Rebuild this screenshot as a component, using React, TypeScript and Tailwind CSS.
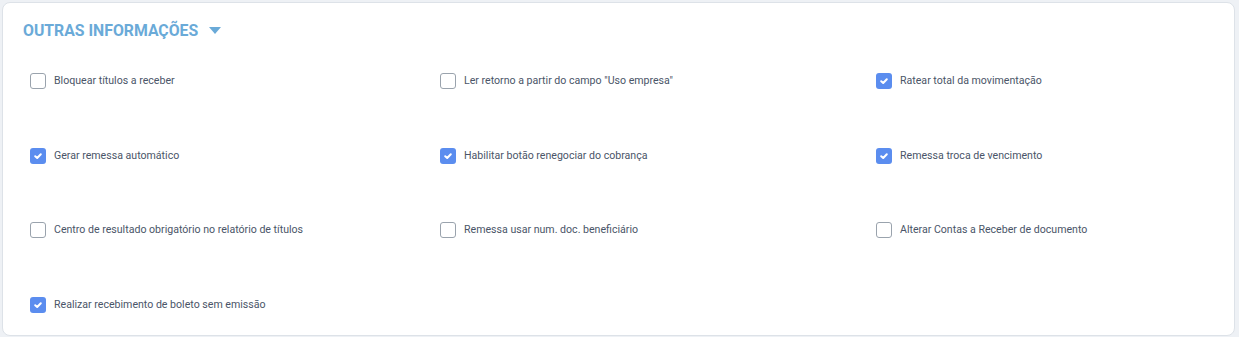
import React from "react";

type Item = { label: string; checked: boolean };

const items: Item[] = [
  { label: "Bloquear títulos a receber", checked: false },
  { label: 'Ler retorno a partir do campo "Uso empresa"', checked: false },
  { label: "Ratear total da movimentação", checked: true },
  { label: "Gerar remessa automático", checked: true },
  { label: "Habilitar botão renegociar do cobrança", checked: true },
  { label: "Remessa troca de vencimento", checked: true },
  { label: "Centro de resultado obrigatório no relatório de títulos", checked: false },
  { label: "Remessa usar num. doc. beneficiário", checked: false },
  { label: "Alterar Contas a Receber de documento", checked: false },
  { label: "Realizar recebimento de boleto sem emissão", checked: true },
];

function Check({ checked }: { checked: boolean }) {
  if (checked) {
    return (
      <span className="w-4 h-4 rounded-[3px] bg-[#5b8def] flex items-center justify-center shrink-0">
        <svg width="10" height="10" viewBox="0 0 10 10" fill="none">
          <path d="M2.2 5.2 L4.2 7 L7.8 3.2" stroke="white" strokeWidth="2" strokeLinecap="round" strokeLinejoin="round" />
        </svg>
      </span>
    );
  }
  return <span className="w-4 h-4 rounded-[3px] border border-[#9aa3ad] bg-white shrink-0" />;
}

export default function App() {
  return (
    <div className="w-[1239px] h-[337px] bg-[#eef1f5] pt-[2px] pl-[2px] pr-[4px] font-['Roboto',sans-serif] overflow-hidden">
      <div className="h-[334px] bg-white border border-[#dde2e8] rounded-lg">
        <div className="flex items-center gap-[11px] pl-[20px] pt-[14px] h-[41px]">
          <span className="text-[15.8px] font-bold text-[#6aaad8]">OUTRAS INFORMAÇÕES</span>
          <svg width="12" height="7" viewBox="0 0 12 7">
            <path d="M0 0 H12 L6 7 Z" fill="#6aaad8" />
          </svg>
        </div>
        <div className="grid grid-cols-[410px_436px_1fr] gap-y-[58.5px] pl-[27px] pt-[29px]">
          {items.map((it) => (
            <div key={it.label} className="flex items-start gap-2 h-4">
              <Check checked={it.checked} />
              <span className="text-[10.6px] text-[#4a5568] leading-4">{it.label}</span>
            </div>
          ))}
        </div>
      </div>
    </div>
  );
}
